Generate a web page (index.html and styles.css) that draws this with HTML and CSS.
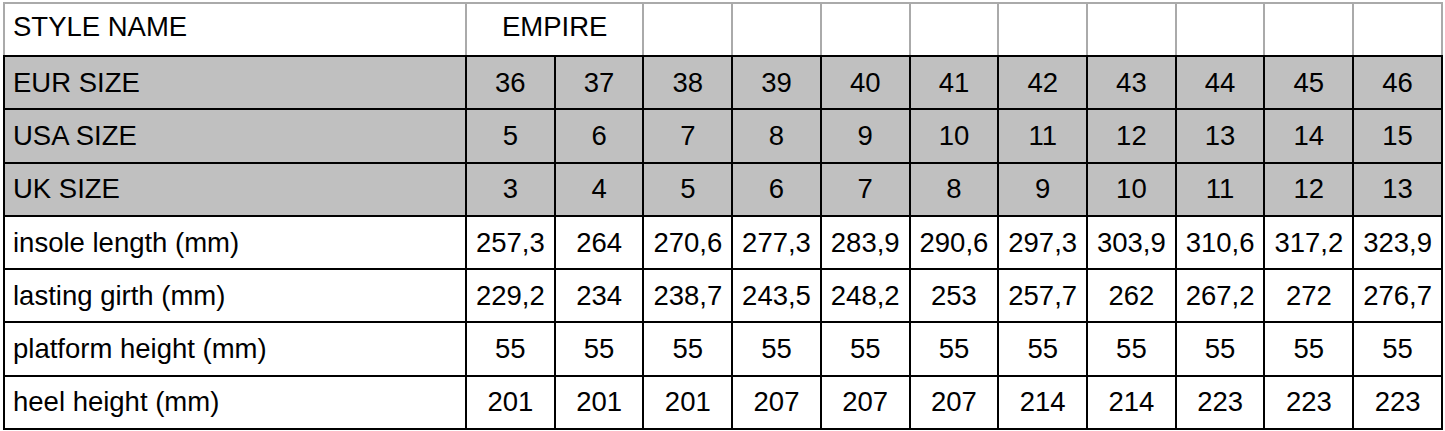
FILE: index.html
```html
<!DOCTYPE html>
<html>
<head>
<meta charset="utf-8">
<link rel="stylesheet" href="styles.css">
</head>
<body>
<div class="wrap">
<table class="chart">
<colgroup>
<col class="c-label">
<col><col><col><col><col><col><col><col><col><col><col>
</colgroup>
<tr class="top">
<td class="label name">STYLE NAME</td>
<td colspan="2" class="empire">EMPIRE</td>
<td></td><td></td><td></td><td></td><td></td><td></td><td></td><td></td><td></td>
</tr>
<tr class="shade">
<td class="label">EUR SIZE</td>
<td>36</td><td>37</td><td>38</td><td>39</td><td>40</td><td>41</td><td>42</td><td>43</td><td>44</td><td>45</td><td>46</td>
</tr>
<tr class="shade">
<td class="label">USA SIZE</td>
<td>5</td><td>6</td><td>7</td><td>8</td><td>9</td><td>10</td><td>11</td><td>12</td><td>13</td><td>14</td><td>15</td>
</tr>
<tr class="shade">
<td class="label">UK SIZE</td>
<td>3</td><td>4</td><td>5</td><td>6</td><td>7</td><td>8</td><td>9</td><td>10</td><td>11</td><td>12</td><td>13</td>
</tr>
<tr>
<td class="label">insole length (mm)</td>
<td>257,3</td><td>264</td><td>270,6</td><td>277,3</td><td>283,9</td><td>290,6</td><td>297,3</td><td>303,9</td><td>310,6</td><td>317,2</td><td>323,9</td>
</tr>
<tr>
<td class="label">lasting girth (mm)</td>
<td>229,2</td><td>234</td><td>238,7</td><td>243,5</td><td>248,2</td><td>253</td><td>257,7</td><td>262</td><td>267,2</td><td>272</td><td>276,7</td>
</tr>
<tr>
<td class="label">platform height (mm)</td>
<td>55</td><td>55</td><td>55</td><td>55</td><td>55</td><td>55</td><td>55</td><td>55</td><td>55</td><td>55</td><td>55</td>
</tr>
<tr>
<td class="label">heel height (mm)</td>
<td>201</td><td>201</td><td>201</td><td>207</td><td>207</td><td>207</td><td>214</td><td>214</td><td>223</td><td>223</td><td>223</td>
</tr>
</table>
</div>
</body>
</html>
```

FILE: styles.css
```css
html, body {
  margin: 0;
  padding: 0;
  background: #ffffff;
}

.wrap {
  padding: 2px 0 0 3px;
}

.chart {
  border-collapse: collapse;
  table-layout: fixed;
  width: 1440px;
  font-family: "Liberation Sans", Arial, Helvetica, sans-serif;
  font-size: 27.5px;
  color: #000;
}

.c-label {
  width: 462px;
}

.chart td {
  border: 2px solid #000;
  height: 51.25px;
  padding: 0;
  text-align: center;
  vertical-align: middle;
  white-space: nowrap;
  line-height: 1;
}

.chart td.label {
  text-align: left;
  padding-left: 8px;
}

.chart .top td {
  height: 45px;
  padding-bottom: 6px;
  border-top-color: #aaaaaa;
  border-left-color: #aaaaaa;
  border-right-color: #aaaaaa;
  border-bottom-color: #000;
}

.chart .shade td {
  background: #c0c0c0;
}
```
